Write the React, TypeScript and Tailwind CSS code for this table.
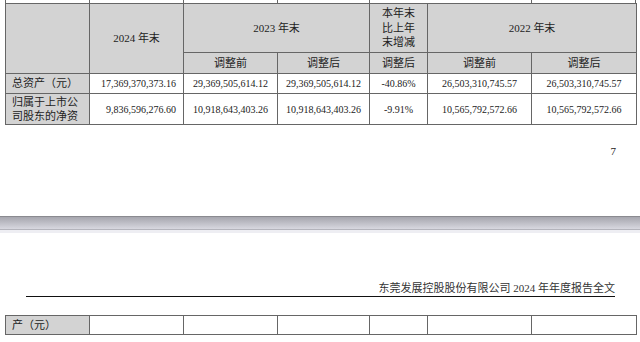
const serif = { fontFamily: '"Liberation Serif", "Noto Sans CJK SC", serif' };

function Cell({ className = "", children }: { className?: string; children?: React.ReactNode }) {
  return <div className={`flex items-center ${className}`}>{children}</div>;
}

export default function App() {
  return (
    <div className="w-[640px] h-[342px] overflow-hidden bg-white text-[#222]" style={serif}>
      {/* page 1 */}
      <div className="h-[216px] flex flex-col">
        {/* clipped top row of the table */}
        <div className="ml-[5px] h-[3px] w-[632px] flex">
          <div className="w-[84px] border-l border-[#666]" />
          <div className="w-[94px] border-l border-[#666]" />
          <div className="w-[94px] border-l border-[#666]" />
          <div className="w-[92px] border-l border-[#666]" />
          <div className="w-[162px] border-l border-[#666]" />
          <div className="w-[105px] border-l border-r border-[#666]" />
        </div>

        <div className="ml-[5px] w-[632px] grid grid-cols-[83px_93px_93px_91px_57px_103px_104px] grid-rows-[48px_20px_19px_30px] gap-px p-px bg-[#666]">
          <Cell className="row-span-2 bg-[#d3d3d3]" />
          <Cell className="row-span-2 bg-[#d3d3d3] justify-center text-[11px]">2024 年末</Cell>
          <Cell className="col-span-2 bg-[#d3d3d3] justify-center text-[11px]">2023 年末</Cell>
          <Cell className="bg-[#d3d3d3] justify-center text-center text-[11px] leading-[14.5px]">
            本年末<br />比上年<br />末增减
          </Cell>
          <Cell className="col-span-2 bg-[#d3d3d3] justify-center text-[11px]">2022 年末</Cell>

          <Cell className="bg-[#d3d3d3] justify-center text-[11px]">调整前</Cell>
          <Cell className="bg-[#d3d3d3] justify-center text-[11px]">调整后</Cell>
          <Cell className="bg-[#d3d3d3] justify-center text-[11px]">调整后</Cell>
          <Cell className="bg-[#d3d3d3] justify-center text-[11px]">调整前</Cell>
          <Cell className="bg-[#d3d3d3] justify-center text-[11px]">调整后</Cell>

          <Cell className="bg-[#d3d3d3] pl-[6px] text-[11px]">总资产（元）</Cell>
          <Cell className="bg-white justify-end pr-[7px] text-[10px]">17,369,370,373.16</Cell>
          <Cell className="bg-white justify-center text-[10px]">29,369,505,614.12</Cell>
          <Cell className="bg-white justify-center text-[10px]">29,369,505,614.12</Cell>
          <Cell className="bg-white justify-center text-[10px]">-40.86%</Cell>
          <Cell className="bg-white justify-center text-[10px]">26,503,310,745.57</Cell>
          <Cell className="bg-white justify-center text-[10px]">26,503,310,745.57</Cell>

          <Cell className="bg-[#d3d3d3] pl-[6px] text-[11px] leading-[14px]">
            归属于上市公<br />司股东的净资
          </Cell>
          <Cell className="bg-white justify-end pr-[7px] text-[10px]">9,836,596,276.60</Cell>
          <Cell className="bg-white justify-center text-[10px]">10,918,643,403.26</Cell>
          <Cell className="bg-white justify-center text-[10px]">10,918,643,403.26</Cell>
          <Cell className="bg-white justify-center text-[10px]">-9.91%</Cell>
          <Cell className="bg-white justify-center text-[10px]">10,565,792,572.66</Cell>
          <Cell className="bg-white justify-center text-[10px]">10,565,792,572.66</Cell>
        </div>

        <div className="mt-[18px] pr-[24px] flex justify-end text-[11px]">7</div>
      </div>

      {/* page break */}
      <div className="h-[14px] border-t border-b border-t-[#8a8a90] border-b-[#b4b4bc] bg-gradient-to-b from-[#a6a6ae] to-[#d8d8e0]" />
      <div className="h-[3px] bg-[#eeeef3]" />

      {/* page 2 */}
      <div className="flex flex-col">
        <div className="mt-[48px] ml-[26px] w-[589px] border-b border-[#111] flex justify-end pb-[1px] text-[11px] text-[#333] leading-[14px]">
          东莞发展控股股份有限公司 2024 年年度报告全文
        </div>
        <div className="mt-[18px] ml-[5px] w-[632px] grid grid-cols-[83px_93px_93px_91px_57px_103px_104px] grid-rows-[18px] gap-px p-px bg-[#666]">
          <Cell className="bg-[#d3d3d3] pl-[6px] text-[11px]">产（元）</Cell>
          <Cell className="bg-white" />
          <Cell className="bg-white" />
          <Cell className="bg-white" />
          <Cell className="bg-white" />
          <Cell className="bg-white" />
          <Cell className="bg-white" />
        </div>
      </div>
    </div>
  );
}
